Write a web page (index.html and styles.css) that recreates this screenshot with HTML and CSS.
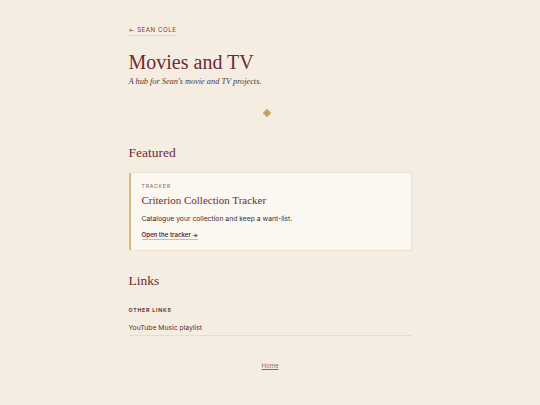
FILE: index.html
```html
<!DOCTYPE html>
<html>
<head>
<meta charset="utf-8">
<link rel="stylesheet" href="styles.css">
</head>
<body>
<main class="page">
  <a class="back" href="#">← Sean Cole</a>
  <h1 class="title">Movies and TV</h1>
  <p class="subtitle">A hub for Sean's movie and TV projects.</p>
  <div class="divider"><span class="diamond"></span></div>
  <h2 class="section-title">Featured</h2>
  <div class="card">
    <div class="kicker">Tracker</div>
    <h3 class="card-title">Criterion Collection Tracker</h3>
    <p class="card-desc">Catalogue your collection and keep a want-list.</p>
    <div class="card-foot"><a class="card-link" href="#">Open the tracker →</a></div>
  </div>
  <h2 class="section-title links-title">Links</h2>
  <div class="group-label">Other links</div>
  <ul class="link-list">
    <li><a href="#">YouTube Music playlist</a></li>
  </ul>
  <footer class="footer"><a href="#">Home</a></footer>
</main>
</body>
</html>
```
FILE: styles.css
```css
html, body {
  margin: 0;
  padding: 0;
  background: #f5ede1;
}
body {
  font-family: Inter, "Liberation Sans", sans-serif;
  color: #3b2b2b;
}
.page {
  width: 283px;
  margin: 0 auto;
  padding-top: 25px;
  display: flex;
  flex-direction: column;
}
a { color: inherit; }
.back {
  align-self: flex-start;
  font-size: 6.2px;
  letter-spacing: 0.5px;
  text-transform: uppercase;
  color: #7a3a3f;
  text-decoration: none;
  border-bottom: 1px solid #e6d9c6;
  padding-bottom: 1px;
  line-height: 9px;
}
.title {
  font-family: "Liberation Serif", serif;
  font-weight: normal;
  font-size: 20px;
  color: #6e2b33;
  margin: 13px 0 0;
  line-height: 26px;
}
.subtitle {
  font-family: "Liberation Serif", serif;
  font-style: italic;
  font-size: 8.3px;
  color: #4a3a36;
  margin: 1px 0 0;
  line-height: 12px;
}
.divider {
  display: flex;
  justify-content: center;
  margin-top: 19px;
  height: 12px;
  align-items: center;
}
.diamond {
  width: 6px;
  height: 6px;
  background: #c9a25c;
  transform: rotate(45deg);
  margin-right: 6px;
}
.section-title {
  font-family: "Liberation Serif", serif;
  font-weight: normal;
  font-size: 13.5px;
  color: #6e2b33;
  margin: 25px 0 0;
  line-height: 18px;
}
.card {
  margin-top: 10px;
  background: #fbf8f2;
  border: 1px solid #ece2d3;
  border-left: 2px solid #d9b978;
  border-radius: 3px;
  padding: 9px 12px 10px 11px;
  display: flex;
  flex-direction: column;
}
.kicker {
  font-size: 5.2px;
  letter-spacing: 0.8px;
  text-transform: uppercase;
  color: #8a6a6a;
  line-height: 8px;
}
.card-title {
  font-family: "Liberation Serif", serif;
  font-weight: normal;
  font-size: 11px;
  color: #6e2b33;
  margin: 2px 0 0;
  line-height: 16px;
}
.card-desc {
  font-size: 6.8px;
  color: #3a302e;
  margin: 5px 0 0;
  line-height: 11px;
}
.card-foot {
  display: flex;
  margin-top: 6px;
}
.card-link {
  font-size: 6.1px;
  font-weight: 600;
  color: #5a2a2e;
  text-decoration: none;
  border-bottom: 1px solid #d9b9a0;
  line-height: 9px;
}
.links-title {
  margin-top: 21px;
}
.group-label {
  margin-top: 16px;
  font-size: 5.2px;
  font-weight: 700;
  letter-spacing: 0.8px;
  text-transform: uppercase;
  color: #5a3a3a;
  line-height: 8px;
}
.link-list {
  list-style: none;
  margin: 8px 0 0;
  padding: 0;
}
.link-list li {
  font-size: 6.8px;
  line-height: 11px;
  border-bottom: 1px solid #e8dccb;
  padding-bottom: 2px;
}
.link-list a {
  color: #5a3030;
  text-decoration: none;
}
.footer {
  margin-top: 25px;
  text-align: center;
  font-size: 6px;
  line-height: 10px;
}
.footer a {
  color: #8a6a68;
  text-decoration: underline;
}
```
